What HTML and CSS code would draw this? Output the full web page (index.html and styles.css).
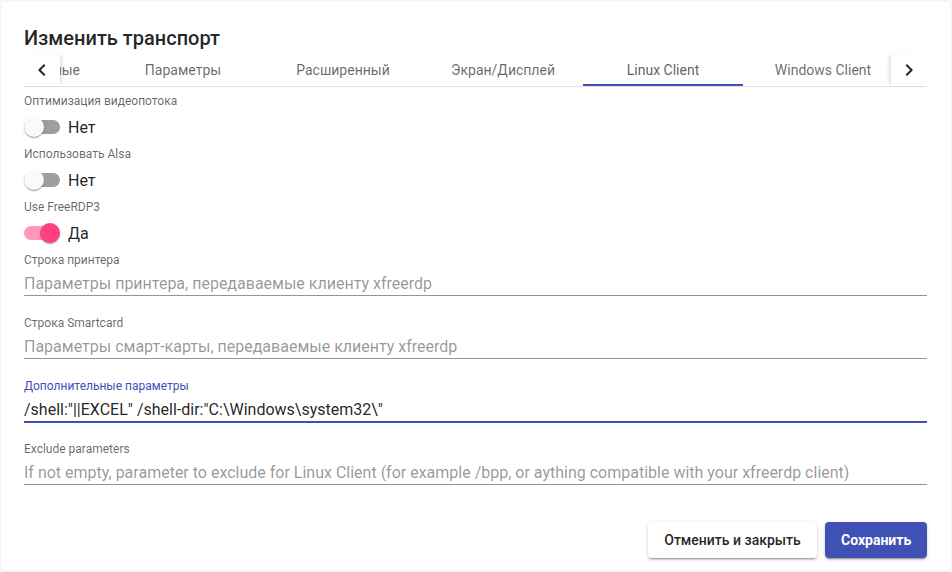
FILE: index.html
```html
<!DOCTYPE html>
<html lang="ru">
<head>
<meta charset="utf-8">
<title>Изменить транспорт</title>
<link rel="stylesheet" href="styles.css">
</head>
<body>
<div class="dialog">
  <h2 class="title">Изменить транспорт</h2>
  <div class="tab-header">
    <button class="pager pager-left" aria-label="prev">
      <svg viewBox="0 0 24 24" width="24" height="24"><path d="M15.41 7.41L14 6l-6 6 6 6 1.41-1.41L10.83 12z"/></svg>
    </button>
    <div class="tab-viewport">
      <div class="tab-list">
        <div class="tab tab-first">Основные</div>
        <div class="tab">Параметры</div>
        <div class="tab">Расширенный</div>
        <div class="tab">Экран/Дисплей</div>
        <div class="tab active">Linux Client</div>
        <div class="tab">Windows Client</div>
      </div>
    </div>
    <button class="pager pager-right" aria-label="next">
      <svg viewBox="0 0 24 24" width="24" height="24"><path d="M10 6L8.59 7.41 13.17 12l-4.58 4.59L10 18l6-6z"/></svg>
    </button>
  </div>

  <div class="form">
    <div class="toggle-field">
      <div class="label">Оптимизация видеопотока</div>
      <div class="toggle"><span class="track"><span class="thumb"></span></span><span class="toggle-text">Нет</span></div>
    </div>
    <div class="toggle-field">
      <div class="label">Использовать Alsa</div>
      <div class="toggle"><span class="track"><span class="thumb"></span></span><span class="toggle-text">Нет</span></div>
    </div>
    <div class="toggle-field">
      <div class="label">Use FreeRDP3</div>
      <div class="toggle on"><span class="track"><span class="thumb"></span></span><span class="toggle-text">Да</span></div>
    </div>

    <div class="text-field">
      <div class="label">Строка принтера</div>
      <div class="input placeholder">Параметры принтера, передаваемые клиенту xfreerdp</div>
    </div>
    <div class="text-field">
      <div class="label">Строка Smartcard</div>
      <div class="input placeholder">Параметры смарт-карты, передаваемые клиенту xfreerdp</div>
    </div>
    <div class="text-field focused">
      <div class="label">Дополнительные параметры</div>
      <div class="input">/shell:"||EXCEL" /shell-dir:"C:\Windows\system32\"</div>
    </div>
    <div class="text-field">
      <div class="label">Exclude parameters</div>
      <div class="input placeholder">If not empty, parameter to exclude for Linux Client (for example /bpp, or aything compatible with your xfreerdp client)</div>
    </div>
  </div>

  <div class="actions">
    <button class="btn btn-cancel">Отменить и закрыть</button>
    <button class="btn btn-save">Сохранить</button>
  </div>
</div>
</body>
</html>
```

FILE: styles.css
```css
html, body {
  margin: 0;
  padding: 0;
  background: #ffffff;
}

body {
  font-family: Roboto, "Liberation Sans", Arial, sans-serif;
  color: rgba(0, 0, 0, 0.87);
}

.dialog {
  box-sizing: border-box;
  width: 952px;
  height: 572px;
  padding: 22px 25px 0 24px;
  background: #fff;
  border-radius: 4px;
  box-shadow: inset 0 0 3px rgba(0, 0, 0, 0.12);
}

.title {
  margin: 0;
  font-size: 20px;
  line-height: 32px;
  font-weight: 500;
  color: rgba(0, 0, 0, 0.87);
}

.tab-header {
  display: flex;
  height: 33px;
  box-sizing: border-box;
  border-bottom: 1px solid #e0e0e0;
}

.pager {
  flex: 0 0 36px;
  width: 36px;
  height: 32px;
  padding: 0;
  border: none;
  background: #fff;
  display: flex;
  align-items: center;
  justify-content: center;
  position: relative;
  z-index: 2;
}

.pager svg {
  fill: rgba(0, 0, 0, 0.87);
}

.pager-left {
  box-shadow: 3px 0 4px -2px rgba(0, 0, 0, 0.18);
}

.pager-right {
  box-shadow: -3px 0 4px -2px rgba(0, 0, 0, 0.18);
}

.tab-viewport {
  flex: 1;
  min-width: 0;
  overflow: hidden;
}

.tab-list {
  display: flex;
  height: 32px;
}

.tab {
  flex: 0 0 160px;
  box-sizing: border-box;
  height: 32px;
  display: flex;
  align-items: center;
  justify-content: center;
  font-size: 14px;
  color: rgba(0, 0, 0, 0.6);
  white-space: nowrap;
  position: relative;
}

.tab-first {
  flex: 0 0 43px;
  min-width: 0;
  overflow: hidden;
  justify-content: flex-end;
  padding-right: 23px;
}

.tab.active {
  color: rgba(0, 0, 0, 0.65);
}

.tab.active::after {
  content: "";
  position: absolute;
  left: 0;
  right: 0;
  bottom: 0;
  height: 2px;
  background: #3f51b5;
}

.form {
  padding-top: 6px;
}

.label {
  font-size: 12px;
  line-height: 16px;
  color: rgba(0, 0, 0, 0.6);
  white-space: nowrap;
}

.toggle-field {
  height: 53px;
}

.toggle {
  margin-top: 6px;
  height: 24px;
  display: flex;
  align-items: center;
}

.track {
  position: relative;
  width: 36px;
  height: 14px;
  border-radius: 7px;
  background: rgba(0, 0, 0, 0.38);
}

.thumb {
  position: absolute;
  top: -3px;
  left: 0;
  width: 20px;
  height: 20px;
  border-radius: 50%;
  background: #fafafa;
  box-shadow: 0 2px 1px -1px rgba(0, 0, 0, 0.2), 0 1px 1px 0 rgba(0, 0, 0, 0.14), 0 1px 3px 0 rgba(0, 0, 0, 0.12);
}

.toggle.on .track {
  background: rgba(255, 64, 129, 0.54);
}

.toggle.on .thumb {
  left: 16px;
  background: #ff4081;
}

.toggle-text {
  margin-left: 8px;
  padding-top: 2px;
  font-size: 16px;
  line-height: 22px;
  color: rgba(0, 0, 0, 0.87);
}

.text-field {
  height: 63px;
}

.input {
  margin-top: 3px;
  height: 25px;
  box-sizing: border-box;
  padding-top: 1px;
  border-bottom: 1px solid rgba(0, 0, 0, 0.42);
  font-size: 16px;
  line-height: 23px;
  color: rgba(0, 0, 0, 0.87);
  white-space: nowrap;
  overflow: hidden;
}

.input.placeholder {
  color: rgba(0, 0, 0, 0.42);
}

.text-field.focused .label {
  color: #3f51b5;
}

.text-field.focused .input {
  height: 26px;
  border-bottom: 2px solid #3f51b5;
}

.actions {
  display: flex;
  justify-content: flex-end;
  gap: 8px;
  margin-top: 18px;
}

.btn {
  height: 36px;
  padding: 0 16px;
  border: none;
  border-radius: 4px;
  font-family: Roboto, "Liberation Sans", Arial, sans-serif;
  font-size: 14px;
  font-weight: 500;
  box-shadow: 0 3px 1px -2px rgba(0, 0, 0, 0.2), 0 2px 2px 0 rgba(0, 0, 0, 0.14), 0 1px 5px 0 rgba(0, 0, 0, 0.12);
}

.btn-cancel {
  background: #fff;
  color: rgba(0, 0, 0, 0.87);
  width: 169px;
}

.btn-save {
  background: #3f51b5;
  color: #fff;
  width: 102px;
  font-weight: 700;
}
```
